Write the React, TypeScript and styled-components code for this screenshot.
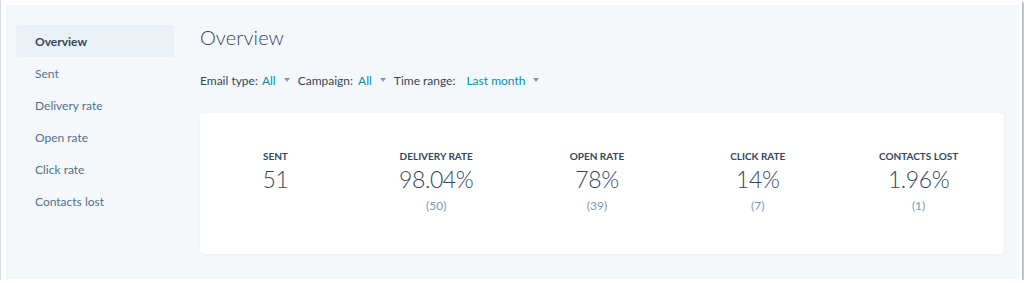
import React from 'react';
import styled, { createGlobalStyle } from 'styled-components';

const GlobalStyle = createGlobalStyle`
  html, body {
    margin: 0;
    padding: 0;
    background: #ffffff;
  }
  body {
    font-family: Lato, "Open Sans", "Liberation Sans", sans-serif;
    color: #33475b;
    -webkit-font-smoothing: antialiased;
  }
`;

const Frame = styled.div`
  width: 1014px;
  height: 274px;
  padding: 5px 2px 1px 5px;
  background: #ffffff;
  border-left: 1px solid #dcdcdc;
  box-shadow: 2px 2px 2px rgba(0, 0, 0, 0.3);
`;

const Panel = styled.div`
  display: flex;
  height: 100%;
  box-sizing: border-box;
  padding: 20px 16px 22px 10px;
  background: #f5f8fa;
`;

const Sidebar = styled.nav`
  display: flex;
  flex-direction: column;
  width: 158px;
  flex-shrink: 0;
  margin-right: 26px;
`;

const NavItem = styled.div<{ $active?: boolean }>`
  height: 32px;
  display: flex;
  align-items: center;
  padding-left: 19px;
  font-size: 12px;
  font-weight: ${(p) => (p.$active ? 700 : 400)};
  color: ${(p) => (p.$active ? '#33475b' : '#516f90')};
  background: ${(p) => (p.$active ? '#eaf0f6' : 'transparent')};
  border-radius: 2px;
`;

const Main = styled.main`
  flex: 1;
  display: flex;
  flex-direction: column;
  min-width: 0;
`;

const Title = styled.h1`
  margin: 0;
  font-size: 20px;
  line-height: 24px;
  font-weight: 300;
  letter-spacing: 0.1px;
  color: #33475b;
`;

const Filters = styled.div`
  display: flex;
  align-items: center;
  height: 20px;
  margin-top: 21px;
  font-size: 12px;
`;

const Filter = styled.div`
  display: flex;
  align-items: center;
  margin-right: 8px;
`;

const FilterLabel = styled.span<{ $gap: number }>`
  color: #33475b;
  margin-right: ${(p) => p.$gap}px;
`;

const FilterValue = styled.span`
  color: #0091ae;
`;

const Caret = styled.span`
  display: inline-block;
  width: 0;
  height: 0;
  margin-left: 8px;
  border-left: 3.5px solid transparent;
  border-right: 3.5px solid transparent;
  border-top: 4px solid #7c98b6;
`;

const Card = styled.section`
  margin-top: 23px;
  height: 141px;
  box-sizing: border-box;
  background: #ffffff;
  border-radius: 3px;
  box-shadow: 0 0 1px rgba(45, 62, 80, 0.15), 0 1px 2px rgba(45, 62, 80, 0.04);
  padding-top: 36px;
`;

const Stats = styled.div`
  display: grid;
  grid-template-columns: repeat(5, 1fr);
  margin: 0 5px 0 -5px;
`;

const Stat = styled.div`
  display: flex;
  flex-direction: column;
  align-items: center;
`;

const StatLabel = styled.div`
  font-size: 10px;
  line-height: 14px;
  font-weight: 700;
  text-transform: uppercase;
  color: #33475b;
`;

const StatValue = styled.div`
  margin-top: 2px;
  font-size: 23px;
  line-height: 28px;
  font-weight: 300;
  letter-spacing: -0.4px;
  color: #33475b;
`;

const StatSub = styled.div`
  margin-top: 5px;
  font-size: 12px;
  line-height: 16px;
  color: #7c98b6;
`;

const navItems = ['Overview', 'Sent', 'Delivery rate', 'Open rate', 'Click rate', 'Contacts lost'];

const filters = [
  { label: 'Email type:', value: 'All', gap: 4 },
  { label: 'Campaign:', value: 'All', gap: 5 },
  { label: 'Time range:', value: 'Last month', gap: 11 },
];

const stats = [
  { label: 'Sent', value: '51' },
  { label: 'Delivery rate', value: '98.04%', sub: '(50)' },
  { label: 'Open rate', value: '78%', sub: '(39)' },
  { label: 'Click rate', value: '14%', sub: '(7)' },
  { label: 'Contacts lost', value: '1.96%', sub: '(1)' },
];

const App: React.FC = () => {
  return (
    <>
      <GlobalStyle />
      <Frame>
        <Panel>
          <Sidebar>
            {navItems.map((item, i) => (
              <NavItem key={item} $active={i === 0}>
                {item}
              </NavItem>
            ))}
          </Sidebar>
          <Main>
            <Title>Overview</Title>
            <Filters>
              {filters.map((f) => (
                <Filter key={f.label}>
                  <FilterLabel $gap={f.gap}>{f.label}</FilterLabel>
                  <FilterValue>{f.value}</FilterValue>
                  <Caret />
                </Filter>
              ))}
            </Filters>
            <Card>
              <Stats>
                {stats.map((s) => (
                  <Stat key={s.label}>
                    <StatLabel>{s.label}</StatLabel>
                    <StatValue>{s.value}</StatValue>
                    {s.sub && <StatSub>{s.sub}</StatSub>}
                  </Stat>
                ))}
              </Stats>
            </Card>
          </Main>
        </Panel>
      </Frame>
    </>
  );
};

export default App;
